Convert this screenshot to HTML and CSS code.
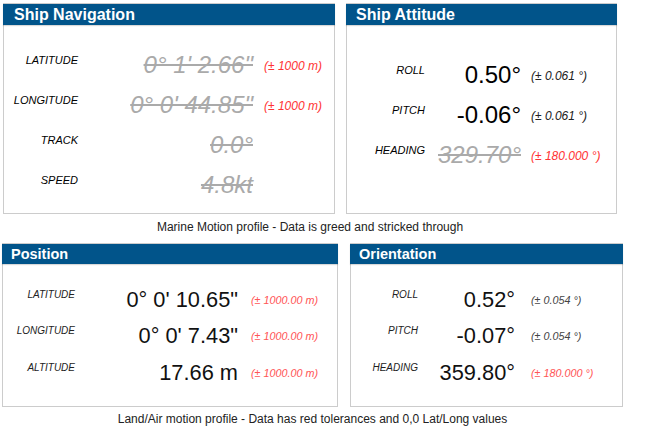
FILE: index.html
```html
<!DOCTYPE html>
<html lang="en">
<head>
    <meta charset="UTF-8">
    <title>Motion profiles</title>
    <link rel="stylesheet" href="styles.css">
</head>
<body>
    <div class="figure figure-marine">
        <div class="panels">
            <div class="panel panel-nav">
                <div class="panel-header">Ship Navigation</div>
                <div class="readings">
                    <div class="label">LATITUDE</div>
                    <div class="value stale">0° 1' 2.66"</div>
                    <div class="tol tol-bad">(± 1000 m)</div>

                    <div class="label">LONGITUDE</div>
                    <div class="value stale">0° 0' 44.85"</div>
                    <div class="tol tol-bad">(± 1000 m)</div>

                    <div class="label">TRACK</div>
                    <div class="value stale">0.0°</div>
                    <div class="tol"></div>

                    <div class="label">SPEED</div>
                    <div class="value stale">4.8kt</div>
                    <div class="tol"></div>
                </div>
            </div>
            <div class="panel panel-attitude">
                <div class="panel-header">Ship Attitude</div>
                <div class="readings">
                    <div class="label">ROLL</div>
                    <div class="value">0.50°</div>
                    <div class="tol">(± 0.061 °)</div>

                    <div class="label">PITCH</div>
                    <div class="value">-0.06°</div>
                    <div class="tol">(± 0.061 °)</div>

                    <div class="label">HEADING</div>
                    <div class="value stale">329.70°</div>
                    <div class="tol tol-bad">(± 180.000 °)</div>
                </div>
            </div>
        </div>
        <p class="caption">Marine Motion profile - Data is greed and stricked through</p>
    </div>

    <div class="figure figure-land">
        <div class="panels">
            <div class="panel panel-small panel-position">
                <div class="panel-header">Position</div>
                <div class="readings">
                    <div class="label">LATITUDE</div>
                    <div class="value">0° 0' 10.65"</div>
                    <div class="tol tol-bad">(± 1000.00 m)</div>

                    <div class="label">LONGITUDE</div>
                    <div class="value">0° 0' 7.43"</div>
                    <div class="tol tol-bad">(± 1000.00 m)</div>

                    <div class="label">ALTITUDE</div>
                    <div class="value">17.66 m</div>
                    <div class="tol tol-bad">(± 1000.00 m)</div>
                </div>
            </div>
            <div class="panel panel-small panel-orientation">
                <div class="panel-header">Orientation</div>
                <div class="readings">
                    <div class="label">ROLL</div>
                    <div class="value">0.52°</div>
                    <div class="tol">(± 0.054 °)</div>

                    <div class="label">PITCH</div>
                    <div class="value">-0.07°</div>
                    <div class="tol">(± 0.054 °)</div>

                    <div class="label">HEADING</div>
                    <div class="value">359.80°</div>
                    <div class="tol tol-bad">(± 180.000 °)</div>
                </div>
            </div>
        </div>
        <p class="caption">Land/Air motion profile - Data has red tolerances and 0,0 Lat/Long values</p>
    </div>
</body>
</html>
```

FILE: styles.css
```css
body {
    margin: 0;
    background-color: #fff;
    color: #000;
    font-family: "Liberation Sans", Arial, sans-serif;
}

.figure {
    width: fit-content;
    display: flex;
    flex-direction: column;
}

.figure-marine {
    margin: 3px 0 0 3px;
}

.figure-land {
    margin: 9px 0 0 2px;
}

.panels {
    display: flex;
    gap: 11px;
}

.figure-land .panels {
    gap: 12px;
}

.panel {
    border: 1px solid #ccc;
    background-color: #fff;
}

.panel-header {
    margin: 0 -1px;
    height: 21px;
    padding-left: 11px;
    background-color: #01548a;
    box-shadow: 0 1px 1px rgba(0, 0, 0, 0.15);
    color: #fff;
    font-size: 16px;
    font-weight: bold;
    line-height: 21px;
}

.readings {
    display: grid;
    grid-auto-rows: 40px;
    align-items: start;
}

.label {
    margin-top: 3px;
    font-size: 11px;
    font-style: italic;
    line-height: 13px;
    text-align: right;
    white-space: nowrap;
}

.value {
    font-size: 24px;
    line-height: 28px;
    text-align: right;
    white-space: nowrap;
}

.value.stale {
    color: #aaa;
    font-style: italic;
    text-decoration: line-through;
}

.tol {
    margin-top: 8px;
    color: #222;
    font-size: 12px;
    font-style: italic;
    line-height: 14px;
    white-space: nowrap;
}

.tol-bad {
    color: #f33;
}

/* top row */
.panel-nav {
    width: 330px;
}

.panel-nav .readings {
    padding: 26px 0 2px;
    grid-template-columns: 74px 164px auto;
    column-gap: 11px;
}

.panel-attitude {
    width: 269px;
}

.panel-attitude .panel-header {
    padding-left: 10px;
}

.panel-attitude .readings {
    padding-top: 36px;
    grid-template-columns: 78px 86px auto;
    column-gap: 10px;
}

/* bottom row, drawn a little smaller */
.panel-small .panel-header {
    height: 20px;
    padding-left: 9px;
    font-size: 14.5px;
    line-height: 20px;
}

.panel-small .readings {
    padding: 23px 0 10px;
    grid-auto-rows: 36.4px;
}

.panel-small .label {
    margin-top: 2px;
    color: #222;
    font-size: 10px;
    line-height: 12px;
}

.panel-small .value {
    color: #111;
    font-size: 21.8px;
    line-height: 26px;
}

.panel-small .tol {
    margin-top: 7px;
    color: #444;
    font-size: 10.8px;
    line-height: 13px;
}

.panel-small .tol-bad {
    color: #f55;
}

.panel-position {
    width: 334px;
}

.panel-position .readings {
    grid-template-columns: 72px 150px auto;
    column-gap: 13px;
}

.panel-orientation {
    width: 271px;
}

.panel-orientation .readings {
    grid-template-columns: 67px 81px auto;
    column-gap: 16px;
}

.caption {
    margin: 6px 0 0;
    color: #222;
    font-size: 12px;
    line-height: 14px;
    text-align: center;
}

.figure-land .caption {
    margin-top: 5px;
}
```
